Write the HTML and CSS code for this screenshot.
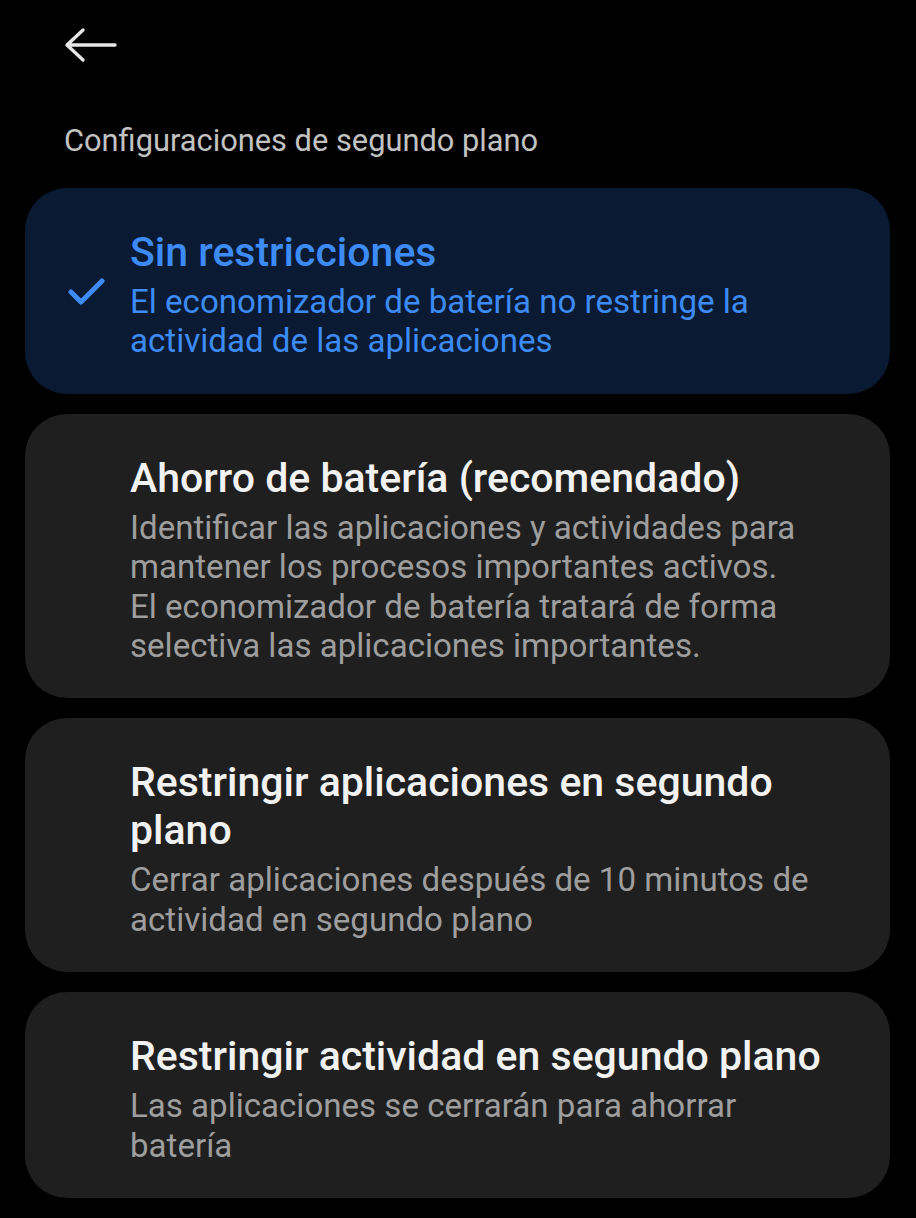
FILE: index.html
```html
<!DOCTYPE html>
<html lang="es">
<head>
<meta charset="utf-8">
<link rel="stylesheet" href="styles.css">
</head>
<body>
<div class="screen">
  <div class="topbar">
    <svg class="back" width="56" height="40" viewBox="0 0 56 40" fill="none" stroke="#e6e6e6" stroke-width="3.4" stroke-linecap="round" stroke-linejoin="round">
      <path d="M4 20 H52 M20 5 L4 20 L20 35"/>
    </svg>
  </div>
  <div class="section">Configuraciones de segundo plano</div>
  <div class="list">
    <div class="card selected">
      <div class="mark">
        <svg width="38" height="30" viewBox="0 0 38 30" fill="none" stroke="#3d8bf5" stroke-width="5" stroke-linecap="round" stroke-linejoin="round">
          <path d="M3 15 L13 25 L34 4"/>
        </svg>
      </div>
      <div class="text">
        <div class="title">Sin restricciones</div>
        <div class="desc">El economizador de batería no restringe la actividad de las aplicaciones</div>
      </div>
    </div>
    <div class="card">
      <div class="mark"></div>
      <div class="text">
        <div class="title">Ahorro de batería (recomendado)</div>
        <div class="desc">Identificar las aplicaciones y actividades para mantener los procesos importantes activos.<br>El economizador de batería tratará de forma selectiva las aplicaciones importantes.</div>
      </div>
    </div>
    <div class="card">
      <div class="mark"></div>
      <div class="text">
        <div class="title">Restringir aplicaciones en segundo plano</div>
        <div class="desc">Cerrar aplicaciones después de 10 minutos de actividad en segundo plano</div>
      </div>
    </div>
    <div class="card">
      <div class="mark"></div>
      <div class="text">
        <div class="title">Restringir actividad en segundo plano</div>
        <div class="desc">Las aplicaciones se cerrarán para ahorrar batería</div>
      </div>
    </div>
  </div>
</div>
</body>
</html>
```
FILE: styles.css
```css
html, body {
  margin: 0;
  padding: 0;
  background: #000;
}
body {
  font-family: Roboto, "Noto Sans", sans-serif;
  width: 916px;
  height: 1218px;
  overflow: hidden;
}
.screen {
  display: flex;
  flex-direction: column;
}
.topbar {
  height: 90px;
  display: flex;
  align-items: center;
  padding-left: 63px;
}
.back {
  display: block;
}
.section {
  margin-top: 33px;
  padding-left: 64px;
  font-size: 30.8px;
  line-height: 36px;
  color: #c2c2c2;
}
.list {
  margin-top: 29px;
  display: flex;
  flex-direction: column;
  gap: 20px;
  padding: 0 26px 0 25px;
}
.card {
  background: #1f1f1f;
  border-radius: 42px;
  display: flex;
  padding: 40px 58px 33px 0;
}
.card.selected {
  background: #0a1a33;
}
.mark {
  width: 105px;
  flex: none;
  display: flex;
  align-items: center;
}
.mark svg {
  margin-left: 43px;
  margin-bottom: 4px;
}
.text {
  flex: 1;
}
.title {
  font-size: 41px;
  font-weight: 500;
  line-height: 48px;
  color: #f2f2f2;
}
.desc {
  margin-top: 6px;
  font-size: 33.1px;
  line-height: 39.4px;
  color: #9e9e9e;
}
.selected .title,
.selected .desc {
  color: #3d8bf5;
}
```
